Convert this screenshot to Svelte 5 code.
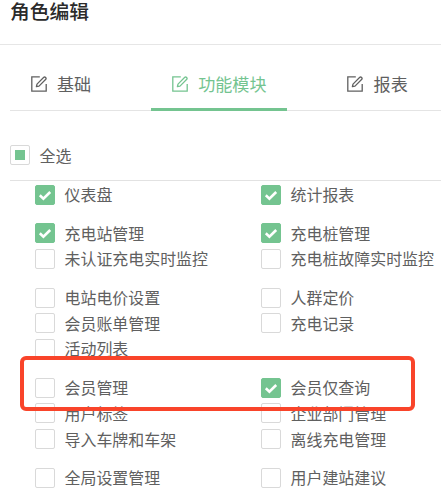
<script>
  let activeTab = $state("module");

  const tabs = [
    { key: "base", label: "基础" },
    { key: "module", label: "功能模块" },
    { key: "report", label: "报表" },
  ];

  let groups = $state([
    [
      { name: "仪表盘", checked: true },
      { name: "统计报表", checked: true },
    ],
    [
      { name: "充电站管理", checked: true },
      { name: "充电桩管理", checked: true },
      { name: "未认证充电实时监控", checked: false },
      { name: "充电桩故障实时监控", checked: false },
    ],
    [
      { name: "电站电价设置", checked: false },
      { name: "人群定价", checked: false },
      { name: "会员账单管理", checked: false },
      { name: "充电记录", checked: false },
      { name: "活动列表", checked: false },
    ],
    [
      { name: "会员管理", checked: false },
      { name: "会员仅查询", checked: true },
      { name: "用户标签", checked: false },
      { name: "企业部门管理", checked: false },
      { name: "导入车牌和车架", checked: false },
      { name: "离线充电管理", checked: false },
    ],
    [
      { name: "全局设置管理", checked: false },
      { name: "用户建站建议", checked: false },
    ],
  ]);

  let allChecked = $derived(groups.flat().every(m => m.checked));
  let someChecked = $derived(groups.flat().some(m => m.checked));

  function toggleAll() {
    const next = !allChecked;
    groups.flat().forEach(m => (m.checked = next));
  }
</script>

{#snippet tick()}
  <svg viewBox="0 0 20 20" width="20" height="20">
    <path d="M4.8 10.3 8.4 13.6 15.2 7" fill="none" stroke="#fff" stroke-width="2.6" />
  </svg>
{/snippet}

<div class="role-edit">
  <h2 class="title">角色编辑</h2>

  <div class="tabs">
    {#each tabs as tab}
      <button class="tab" class:active={activeTab === tab.key} onclick={() => (activeTab = tab.key)}>
        <svg class="tab-icon" viewBox="0 0 16 16" width="16" height="16">
          <g fill="none" stroke="currentColor" stroke-width="1.3">
            <path d="M8.8.8H.8v14.4h14.4V8" />
            <path d="M5.4 10.7 6 8.1 12.8 1.3Q13.7.6 14.6 1.5T14.8 3.3L8 10.1Z" stroke-linejoin="round" />
          </g>
        </svg>
        {tab.label}
      </button>
    {/each}
  </div>

  <div class="all-bar">
    <button class="check-item" onclick={toggleAll}>
      <span class="box" class:checked={allChecked} class:partial={someChecked && !allChecked}>
        {#if allChecked}{@render tick()}{/if}
      </span>
      <span class="name">全选</span>
    </button>
  </div>

  <div class="modules">
    {#each groups as group, i}
      <div class="group">
        {#each group as item}
          <button class="check-item" onclick={() => (item.checked = !item.checked)}>
            <span class="box" class:checked={item.checked}>
              {#if item.checked}{@render tick()}{/if}
            </span>
            <span class="name">{item.name}</span>
          </button>
        {/each}
        {#if i === 3}
          <div class="highlight"></div>
        {/if}
      </div>
    {/each}
  </div>
</div>

<style>
  :global(body) {
    background: #fff;
  }

  .role-edit {
    height: 499px;
    overflow: hidden;
    color: #606060;
    font-family: "Noto Sans CJK SC", sans-serif;
  }

  .title {
    box-sizing: border-box;
    height: 45px;
    margin: 0;
    padding-left: 10px;
    border-bottom: 1px solid #e6e6e6;
    color: #2b2b2b;
    font-size: 19.8px;
    font-weight: 500;
    line-height: 22px;
  }

  button {
    padding: 0;
    border: none;
    background: none;
    color: inherit;
    font-family: inherit;
    white-space: nowrap;
    cursor: pointer;
  }

  .tabs {
    display: flex;
    gap: 40px;
    height: 65px;
    margin-left: 10px;
    border-bottom: 1px solid #e4e4e4;
  }

  .tab {
    display: flex;
    flex: none;
    align-items: center;
    gap: 10.5px;
    box-sizing: border-box;
    height: 66px;
    padding: 15px 20px 0 20.5px;
    border-bottom: 3px solid transparent;
    font-size: 17.1px;
    line-height: 24px;
  }
  .tab.active {
    color: #74c490;
    border-bottom-color: #74c490;
  }

  .tab-icon {
    flex: none;
  }

  .all-bar {
    display: flex;
    align-items: center;
    height: 70px;
    box-sizing: border-box;
    margin-left: 10px;
    padding-top: 20px;
    border-bottom: 1px solid #e2e2e2;
  }

  .modules {
    padding: 0.8px 0 0 35px;
  }

  .group {
    position: relative;
    display: grid;
    grid-template-columns: 226px 226px;
    grid-auto-rows: 25.75px;
    margin-bottom: 12.85px;
  }

  .check-item {
    display: flex;
    align-items: center;
    gap: 9.5px;
    font-size: 15.95px;
    line-height: 24px;
  }

  .name {
    margin-bottom: 1.4px;
  }

  .box {
    display: flex;
    flex: none;
    align-items: center;
    justify-content: center;
    box-sizing: border-box;
    width: 20px;
    height: 20px;
    border: 1px solid #d9d9d9;
    border-radius: 2px;
    background: #fff;
  }
  .box.checked {
    border-color: #74c490;
    background: #74c490;
  }
  .box.partial::after {
    content: "";
    width: 10px;
    height: 10px;
    background: #74c490;
  }
  .box svg {
    flex: none;
  }

  .highlight {
    position: absolute;
    top: -18.5px;
    left: -15px;
    box-sizing: border-box;
    width: 395px;
    height: 55px;
    border: 4px solid #f9442a;
    border-radius: 6px;
  }
</style>
